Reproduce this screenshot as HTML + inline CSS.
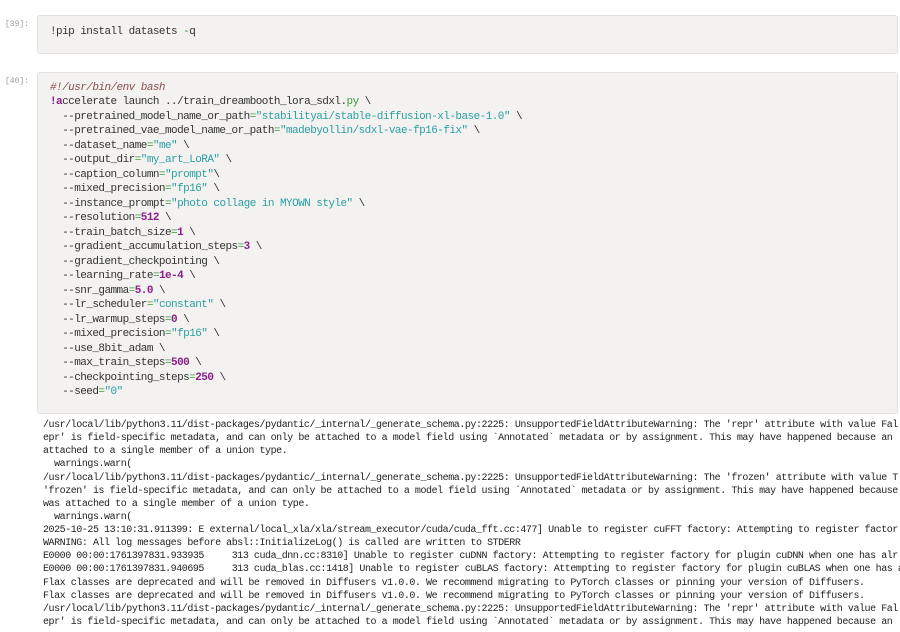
<!DOCTYPE html>
<html><head><meta charset="utf-8"><style>
body{margin:0;background:#fff;width:900px;height:632px;overflow:hidden;position:relative;font-family:"Liberation Mono",monospace}
.p{position:absolute;left:5px;font-size:8px;color:#9a9a9a;font-family:"Liberation Mono",monospace}
.box{position:absolute;left:37px;width:861px;background:#f3f2f1;border:1px solid #e2e2e2;border-radius:3px;box-sizing:border-box}
pre{margin:0;font-family:"Liberation Mono",monospace;white-space:pre}
.code{position:absolute;left:50px;font-size:11px;letter-spacing:-0.55px;line-height:14.48px;color:#333}
.c{color:#8b4e4e;font-style:italic}
.s{color:#2aa0a0}
.n{color:#8a1f8a;font-weight:bold}
.e{color:#3a9a3a}
.b{color:#8a1f8a;font-weight:bold}
.out{position:absolute;left:43px;top:419px;font-size:10px;letter-spacing:-0.45px;line-height:13.13px;color:#222}
</style></head><body>
<div class="p" style="top:20px">[39]:</div>
<div class="box" style="top:15px;height:39px"></div>
<pre class="code" style="top:25px">!pip install datasets <span class="e">-</span>q</pre>
<div class="p" style="top:77px">[40]:</div>
<div class="box" style="top:72px;height:342px"></div>
<pre class="code" style="top:81px"><span class="c">#!/usr/bin/env bash</span>
<span class="b">!a</span>ccelerate launch ../train_dreambooth_lora_sdxl.<span class="e">py</span> \
  --pretrained_model_name_or_path<span class="e">=</span><span class="s">"stabilityai/stable-diffusion-xl-base-1.0"</span> \
  --pretrained_vae_model_name_or_path<span class="e">=</span><span class="s">"madebyollin/sdxl-vae-fp16-fix"</span> \
  --dataset_name<span class="e">=</span><span class="s">"me"</span> \
  --output_dir<span class="e">=</span><span class="s">"my_art_LoRA"</span> \
  --caption_column<span class="e">=</span><span class="s">"prompt"</span>\
  --mixed_precision<span class="e">=</span><span class="s">"fp16"</span> \
  --instance_prompt<span class="e">=</span><span class="s">"photo collage in MYOWN style"</span> \
  --resolution<span class="e">=</span><span class="n">512</span> \
  --train_batch_size<span class="e">=</span><span class="n">1</span> \
  --gradient_accumulation_steps<span class="e">=</span><span class="n">3</span> \
  --gradient_checkpointing \
  --learning_rate<span class="e">=</span><span class="n">1e-4</span> \
  --snr_gamma<span class="e">=</span><span class="n">5.0</span> \
  --lr_scheduler<span class="e">=</span><span class="s">"constant"</span> \
  --lr_warmup_steps<span class="e">=</span><span class="n">0</span> \
  --mixed_precision<span class="e">=</span><span class="s">"fp16"</span> \
  --use_8bit_adam \
  --max_train_steps<span class="e">=</span><span class="n">500</span> \
  --checkpointing_steps<span class="e">=</span><span class="n">250</span> \
  --seed<span class="e">=</span><span class="s">"0"</span></pre>
<pre class="out">/usr/local/lib/python3.11/dist-packages/pydantic/_internal/_generate_schema.py:2225: UnsupportedFieldAttributeWarning: The 'repr' attribute with value Fal
epr' is field-specific metadata, and can only be attached to a model field using `Annotated` metadata or by assignment. This may have happened because an
attached to a single member of a union type.
  warnings.warn(
/usr/local/lib/python3.11/dist-packages/pydantic/_internal/_generate_schema.py:2225: UnsupportedFieldAttributeWarning: The 'frozen' attribute with value T
'frozen' is field-specific metadata, and can only be attached to a model field using `Annotated` metadata or by assignment. This may have happened because
was attached to a single member of a union type.
  warnings.warn(
2025-10-25 13:10:31.911399: E external/local_xla/xla/stream_executor/cuda/cuda_fft.cc:477] Unable to register cuFFT factory: Attempting to register factor
WARNING: All log messages before absl::InitializeLog() is called are written to STDERR
E0000 00:00:1761397831.933935     313 cuda_dnn.cc:8310] Unable to register cuDNN factory: Attempting to register factory for plugin cuDNN when one has alr
E0000 00:00:1761397831.940695     313 cuda_blas.cc:1418] Unable to register cuBLAS factory: Attempting to register factory for plugin cuBLAS when one has a
Flax classes are deprecated and will be removed in Diffusers v1.0.0. We recommend migrating to PyTorch classes or pinning your version of Diffusers.
Flax classes are deprecated and will be removed in Diffusers v1.0.0. We recommend migrating to PyTorch classes or pinning your version of Diffusers.
/usr/local/lib/python3.11/dist-packages/pydantic/_internal/_generate_schema.py:2225: UnsupportedFieldAttributeWarning: The 'repr' attribute with value Fal
epr' is field-specific metadata, and can only be attached to a model field using `Annotated` metadata or by assignment. This may have happened because an</pre>
</body></html>
